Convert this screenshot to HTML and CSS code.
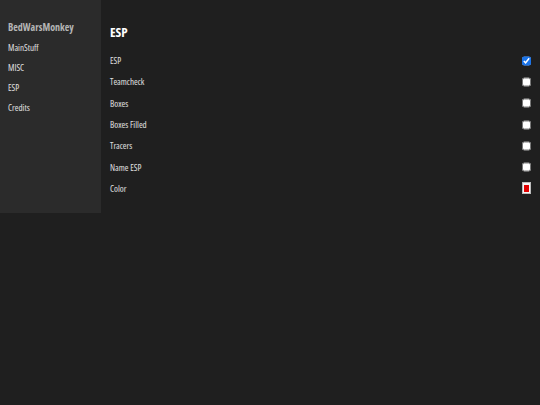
FILE: index.html
```html
<!DOCTYPE html>
<html lang="en">
<head>
  <meta charset="UTF-8" />
  <title>BedWarsMonkey</title>
  <link rel="stylesheet" href="styles.css">
</head>
<body>

<div class="wrap">
  <div class="sidebar">
    <div class="brand">BedWarsMonkey</div>
    <div class="nav-item">MainStuff</div>
    <div class="nav-item">MISC</div>
    <div class="nav-item">ESP</div>
    <div class="nav-item">Credits</div>
  </div>

  <div class="main">
    <h2>ESP</h2>
    <div class="row"><span>ESP</span><input type="checkbox" checked></div>
    <div class="row"><span>Teamcheck</span><input type="checkbox"></div>
    <div class="row"><span>Boxes</span><input type="checkbox"></div>
    <div class="row"><span>Boxes Filled</span><input type="checkbox"></div>
    <div class="row"><span>Tracers</span><input type="checkbox"></div>
    <div class="row"><span>Name ESP</span><input type="checkbox"></div>
    <div class="row"><span>Color</span><span class="swatch"><span class="swatch-fill"></span></span></div>
  </div>
</div>

</body>
</html>
```

FILE: styles.css
```css
body {
  margin: 0;
  background: #1f1f1f;
  font-family: 'Open Sans', 'Liberation Sans', sans-serif;
  font-stretch: condensed;
  color: #e0e0e0;
  height: 405px;
}
.wrap {
  display: flex;
  align-items: stretch;
}
.sidebar {
  width: 101px;
  background: #2b2b2b;
  padding: 17px 0 0 8px;
  box-sizing: border-box;
}
.brand {
  font-size: 10px;
  font-weight: bold;
  color: #b5b5b5;
  line-height: 20px;
  margin-bottom: 1px;
}
.nav-item {
  font-size: 9px;
  line-height: 20px;
  color: #e0e0e0;
}
.main {
  flex: 1;
  padding: 22px 9px 14px 9px;
}
h2 {
  margin: 0 0 8px 0;
  font-size: 13px;
  line-height: 20px;
  color: #fff;
}
.row {
  display: flex;
  justify-content: space-between;
  align-items: center;
  height: 21.3px;
  font-size: 9px;
  color: #e0e0e0;
}
.row input {
  margin: 0;
  width: 9px;
  height: 10px;
  accent-color: #1a73e8;
}
.swatch {
  width: 9px;
  height: 12px;
  background: #f4f4f4;
  border: 1px solid #bbb;
  box-sizing: border-box;
  display: flex;
  align-items: center;
  justify-content: center;
}
.swatch-fill {
  width: 5px;
  height: 7px;
  background: #e00000;
}
```
